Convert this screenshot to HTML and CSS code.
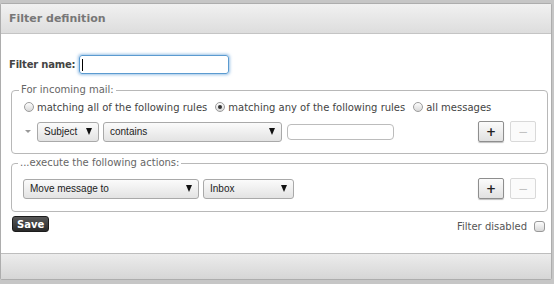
FILE: index.html
```html
<!DOCTYPE html>
<html>
<head>
    <title>Filter definition</title>
    <link rel="stylesheet" href="styles.css">
</head>
<body>
    <div class="panel">
        <div class="panel-head">Filter definition</div>

        <div class="panel-body">
            <div class="name-row">
                <label class="name-label">Filter name:</label>
                <div class="name-input"><span class="text-caret"></span></div>
            </div>

            <fieldset class="group rules">
                <legend>For incoming mail:</legend>
                <div class="radios">
                    <span class="radio"><span class="radio-dot"></span>matching all of the following rules</span>
                    <span class="radio"><span class="radio-dot checked"></span>matching any of the following rules</span>
                    <span class="radio"><span class="radio-dot"></span>all messages</span>
                </div>
                <div class="row">
                    <span class="toggle"></span>
                    <div class="sel sel-header">Subject<span class="arrow"></span></div>
                    <div class="sel sel-op">contains<span class="arrow"></span></div>
                    <div class="text-input"></div>
                    <div class="btns">
                        <button class="btn-add">+</button>
                        <button class="btn-del" disabled>&minus;</button>
                    </div>
                </div>
            </fieldset>

            <fieldset class="group actions">
                <legend>...execute the following actions:</legend>
                <div class="row">
                    <div class="sel sel-action">Move message to<span class="arrow"></span></div>
                    <div class="sel sel-folder">Inbox<span class="arrow"></span></div>
                    <div class="btns">
                        <button class="btn-add">+</button>
                        <button class="btn-del" disabled>&minus;</button>
                    </div>
                </div>
            </fieldset>

            <div class="save-row">
                <button class="save-btn">Save</button>
                <label class="disabled-label">Filter disabled <span class="checkbox"></span></label>
            </div>
        </div>

        <div class="panel-foot"></div>
    </div>
</body>
</html>
```

FILE: styles.css
```css
body {
    margin: 0;
    padding: 3px 2px 0 0;
    background-color: #c6c6c6;
    font-family: "DejaVu Sans", Verdana, sans-serif;
    font-size: 10px;
    color: #444;
}

.panel {
    height: 277px;
    box-sizing: border-box;
    display: flex;
    flex-direction: column;
    background-color: #fff;
    border: 1px solid #adadad;
    border-radius: 2px;
}

.panel-head {
    height: 29px;
    line-height: 29px;
    padding-left: 8px;
    font-size: 11px;
    font-weight: bold;
    color: #777;
    background: linear-gradient(#f1f1f1, #dddddd);
    border-bottom: 1px solid #c4c4c4;
}

.panel-body {
    flex: 1;
    padding: 21px 3px 0 8px;
}

.panel-foot {
    height: 25px;
    border-top: 1px solid #bdbdbd;
    background: linear-gradient(#ececec, #d6d6d6);
}

/* filter name */
.name-row {
    display: flex;
    align-items: center;
    gap: 4px;
    height: 19px;
}

.name-label {
    font-weight: bold;
    color: #444;
    letter-spacing: -0.2px;
}

.name-input {
    width: 150px;
    height: 19px;
    box-sizing: border-box;
    border: 1px solid #5b9bd0;
    border-radius: 3px;
    box-shadow: 0 0 3px 1px rgba(90, 155, 215, 0.6);
    padding: 3px 0 0 2px;
}

.text-caret {
    display: block;
    width: 1px;
    height: 12px;
    background-color: #000;
}

/* fieldsets */
.group {
    margin: 10px 0 0 2px;
    padding: 0 11px 11px 12px;
    border: 1px solid #b8b8b8;
    border-radius: 4px;
}

.group legend {
    margin-left: -5px;
    padding: 0 2px;
    line-height: 12px;
    color: #666;
}

.actions {
    margin-top: 3px;
    padding-left: 11px;
    padding-bottom: 12px;
}

.radios {
    display: flex;
    align-items: center;
    height: 14px;
    margin-top: 4px;
}

.radio {
    display: inline-flex;
    align-items: center;
    gap: 3px;
    margin-right: 8px;
}

.radio-dot {
    width: 10px;
    height: 10px;
    box-sizing: border-box;
    border: 1px solid #9c9c9c;
    border-radius: 50%;
    background: linear-gradient(#fdfdfd, #d9d9d9);
    display: flex;
    align-items: center;
    justify-content: center;
}

.radio-dot.checked::after {
    content: "";
    width: 4px;
    height: 4px;
    border-radius: 50%;
    background-color: #333;
}

.row {
    display: flex;
    align-items: center;
    height: 21px;
    margin-top: 7px;
}

.actions .row {
    margin-top: 9px;
}

.toggle {
    width: 0;
    height: 0;
    margin: 0 6px 0 1px;
    border-left: 3px solid transparent;
    border-right: 3px solid transparent;
    border-top: 3px solid #999;
}

.sel {
    display: flex;
    align-items: center;
    justify-content: space-between;
    height: 20px;
    box-sizing: border-box;
    padding: 0 6px;
    margin-right: 4px;
    border: 1px solid #a9a9a9;
    border-radius: 3px;
    background: linear-gradient(#fbfbfb, #e3e3e3);
    font-family: "Liberation Sans", Arial, sans-serif;
    font-size: 10px;
    color: #222;
}

.sel-header { width: 62px; }
.sel-op { width: 179px; }
.sel-action { width: 176px; }
.sel-folder { width: 91px; }

.arrow {
    width: 0;
    height: 0;
    border-left: 3px solid transparent;
    border-right: 3px solid transparent;
    border-top: 7px solid #111;
}

.text-input {
    width: 107px;
    height: 16px;
    box-sizing: border-box;
    margin-left: 1px;
    border: 1px solid #bcbcbc;
    border-radius: 4px;
}

.btns {
    margin-left: auto;
    display: flex;
    gap: 6px;
}

.btns button {
    width: 26px;
    height: 21px;
    padding: 0;
    border: 1px solid #8e8e8e;
    border-radius: 2px;
    background: linear-gradient(#fbfbfb, #e1e1e1);
    box-shadow: 0 1px 1px rgba(0, 0, 0, 0.25);
    font-family: "DejaVu Sans", sans-serif;
    font-size: 12px;
    font-weight: bold;
    color: #222;
}

.btns .btn-del {
    border-color: #d9d9d9;
    background: #fbfbfb;
    box-shadow: none;
    font-weight: normal;
    color: #c2c2c2;
}

/* bottom row */
.save-row {
    display: flex;
    justify-content: space-between;
    align-items: center;
    margin: 4px 3px 0 3px;
}

.save-btn {
    height: 16px;
    padding: 0 4px;
    border: 1px solid #1c1c1c;
    border-radius: 3px;
    background: linear-gradient(#585858, #2a2a2a);
    font-family: "DejaVu Sans", sans-serif;
    font-size: 10px;
    font-weight: bold;
    color: #fff;
}

.disabled-label {
    display: flex;
    align-items: center;
    gap: 7px;
    color: #555;
    margin-top: 4px;
}

.checkbox {
    width: 11px;
    height: 11px;
    box-sizing: border-box;
    border: 1px solid #999;
    border-radius: 3px;
    background: linear-gradient(#fdfdfd, #d8d8d8);
}
```
